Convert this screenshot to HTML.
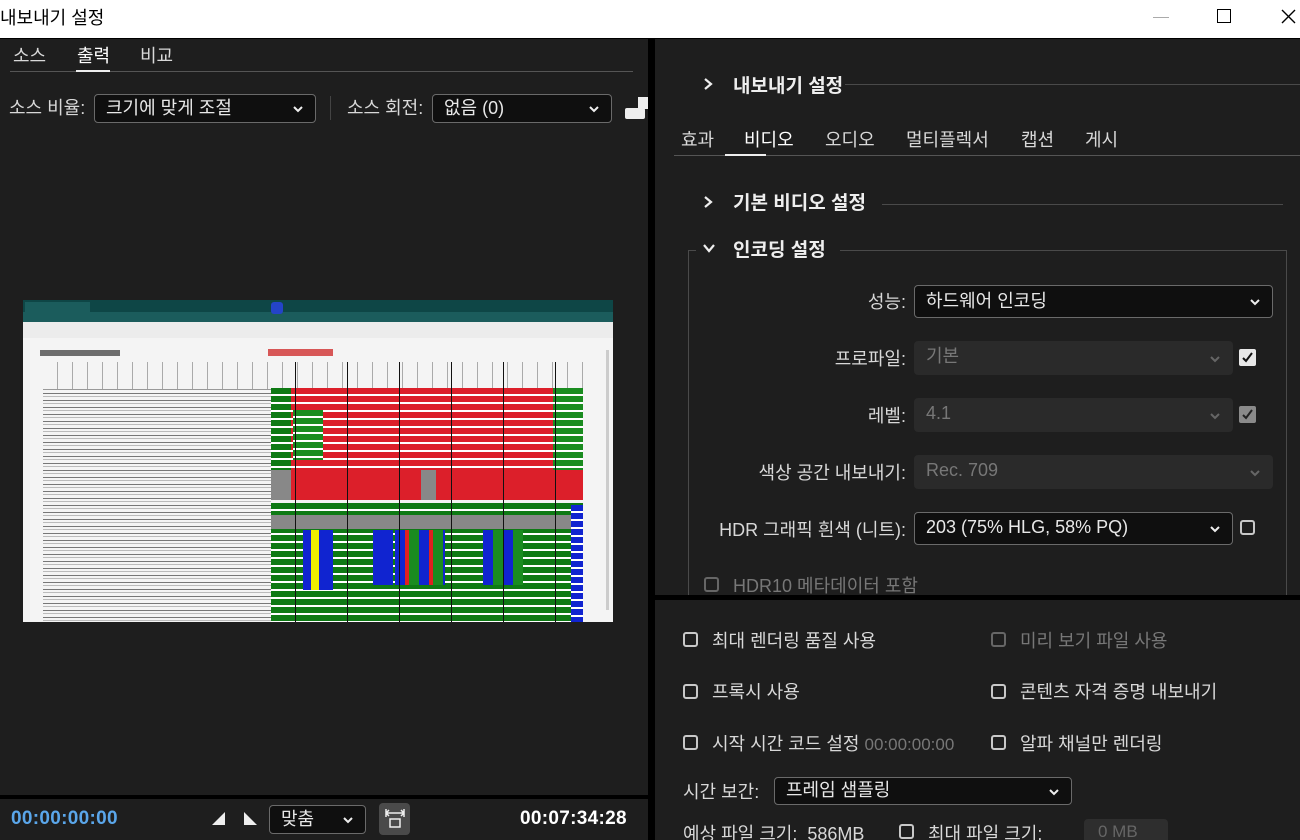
<!DOCTYPE html>
<html><head><meta charset="utf-8">
<style>
*{margin:0;padding:0;box-sizing:border-box}
html,body{width:1300px;height:840px;overflow:hidden}
body{background:#000;font-family:"Liberation Sans","Noto Sans CJK KR",sans-serif;color:#d8d8d8;position:relative}
.a{position:absolute}
.t{position:absolute;white-space:nowrap;font-size:18px}
.r{position:absolute;white-space:nowrap;font-size:18px;right:394px;text-align:right}
.sel{position:absolute;border:1px solid #6a6a6a;border-radius:4px;background:#0f0f0f;color:#e8e8e8;font-size:18px;padding-left:11px;line-height:27px}
.dis{background:#2a2a2a;border-color:#2a2a2a;color:#777}
.chev{position:absolute;right:12px;top:9px;width:10px;height:10px}
.cb{position:absolute;width:15px;height:15px;border:2px solid #c8c8c8;border-radius:3px}
.hl{position:absolute;height:1px;background:#4a4a4a}
</style></head><body>
<div class="a" style="left:0;top:0;width:1300px;height:38px;background:#fff"></div>
<div class="t" style="left:0;top:4px;color:#000;font-size:18px">내보내기 설정</div>
<div class="a" style="left:1153px;top:17px;width:16px;height:1px;background:#aaa"></div>
<div class="a" style="left:1217px;top:9px;width:14px;height:14px;border:1.5px solid #000"></div>
<svg class="a" style="left:1281px;top:9px" width="15" height="15"><path d="M1 1L14 14M14 1L1 14" stroke="#000" stroke-width="1.4"/></svg>

<div class="a" style="left:0;top:39px;width:648px;height:756px;background:#1e1e1e"></div>
<div class="t" style="left:13px;top:42px">소스</div>
<div class="t" style="left:77px;top:42px;color:#fff">출력</div>
<div class="t" style="left:140px;top:42px">비교</div>
<div class="hl" style="left:10px;top:71px;width:623px;background:#555"></div>
<div class="a" style="left:76px;top:70px;width:34px;height:2px;background:#eee"></div>

<div class="t" style="left:9px;top:94px">소스 비율:</div>
<div class="sel" style="left:94px;top:94px;width:222px;height:29px">크기에 맞게 조절<svg class="chev" viewBox="0 0 10 10"><path d="M1 3L5 7L9 3" stroke="#eee" stroke-width="2" fill="none"/></svg></div>
<div class="a" style="left:330px;top:96px;width:1px;height:24px;background:#444"></div>
<div class="t" style="left:347px;top:94px">소스 회전:</div>
<div class="sel" style="left:432px;top:94px;width:180px;height:29px">없음 (0)<svg class="chev" viewBox="0 0 10 10"><path d="M1 3L5 7L9 3" stroke="#eee" stroke-width="2" fill="none"/></svg></div>
<div class="a" style="left:625px;top:108px;width:20px;height:11px;background:#eee;border-radius:2px"></div>
<div class="a" style="left:638px;top:97px;width:10px;height:12px;background:#eee"></div>

<div class="a" style="left:23px;top:300px;width:590px;height:322px;background:#f4f4f4;overflow:hidden">
 <div class="a" style="left:0;top:0;width:590px;height:12px;background:#0e4646"></div>
 <div class="a" style="left:0;top:12px;width:590px;height:10px;background:#1b5c5c"></div>
 <div class="a" style="left:2px;top:2px;width:65px;height:10px;background:#1b5c5c"></div>
 <div class="a" style="left:248px;top:2px;width:12px;height:12px;background:#2444c8;border-radius:3px"></div>
 <div class="a" style="left:0;top:22px;width:590px;height:16px;background:#ececec"></div>
 <div class="a" style="left:17px;top:50px;width:80px;height:6px;background:#333;opacity:.7"></div>
 <div class="a" style="left:245px;top:49px;width:65px;height:7px;background:#d03030;opacity:.8"></div>
 <div class="a" style="left:20px;top:62px;width:540px;height:28px;border-bottom:1px solid #999;background:repeating-linear-gradient(90deg,#f4f4f4 0 14px,#aaa 14px 15px)"></div>
 <div class="a" style="left:20px;top:90px;width:228px;height:232px;background:repeating-linear-gradient(180deg,#f4f4f4 0 3px,#777 3px 4px,#f4f4f4 4px 6px,#bbb 6px 7px)"></div>
 <div class="a" style="left:248px;top:88px;width:312px;height:108px;background:repeating-linear-gradient(180deg,#dc1f2a 0 6px,#fff 6px 8px)"></div>
 <div class="a" style="left:248px;top:88px;width:20px;height:112px;background:repeating-linear-gradient(180deg,#0e7a14 0 6px,#fff 6px 8px)"></div>
 <div class="a" style="left:270px;top:110px;width:30px;height:50px;background:repeating-linear-gradient(180deg,#1a8c20 0 6px,#fff 6px 8px)"></div>
 <div class="a" style="left:530px;top:88px;width:30px;height:100px;background:repeating-linear-gradient(180deg,#1a8c20 0 6px,#fff 6px 8px)"></div>
 <div class="a" style="left:248px;top:170px;width:312px;height:30px;background:repeating-linear-gradient(90deg,#888 0 20px,#dc1f2a 20px 150px,#888 150px 165px,#dc1f2a 165px 312px)"></div>
 <div class="a" style="left:248px;top:203px;width:312px;height:119px;background:repeating-linear-gradient(180deg,#0e7a14 0 6px,#fff 6px 8px)"></div>
 <div class="a" style="left:248px;top:215px;width:312px;height:14px;background:#888"></div>
 <div class="a" style="left:280px;top:230px;width:30px;height:60px;background:repeating-linear-gradient(90deg,#1024d0 0 8px,#f0f000 8px 16px,#1024d0 16px 30px)"></div>
 <div class="a" style="left:350px;top:230px;width:20px;height:55px;background:#1024d0"></div>
 <div class="a" style="left:372px;top:230px;width:50px;height:55px;background:repeating-linear-gradient(90deg,#1024d0 0 10px,#e02020 10px 14px,#1a8c20 14px 24px)"></div>
 <div class="a" style="left:460px;top:230px;width:40px;height:55px;background:repeating-linear-gradient(90deg,#1024d0 0 10px,#1a8c20 10px 20px)"></div>
 <div class="a" style="left:548px;top:205px;width:12px;height:117px;background:repeating-linear-gradient(180deg,#1024d0 0 6px,#fff 6px 8px)"></div>
 <div class="a" style="left:248px;top:62px;width:312px;height:260px;background:repeating-linear-gradient(90deg,transparent 0 24px,#111 24px 25px,transparent 25px 52px)"></div>
 <div class="a" style="left:583px;top:50px;width:3px;height:260px;background:#ccc"></div>
</div>

<div class="a" style="left:0;top:799px;width:648px;height:41px;background:#1e1e1e"></div>
<div class="t" style="left:11px;top:808px;color:#5aa6ea;font-weight:bold;font-size:19px;letter-spacing:0.3px">00:00:00:00</div>
<svg class="a" style="left:212px;top:812px" width="14" height="14"><path d="M13 0L13 13L0 13Z" fill="#eee"/></svg>
<svg class="a" style="left:243px;top:812px" width="14" height="14"><path d="M1 0L1 13L14 13Z" fill="#eee"/></svg>
<div class="sel" style="left:269px;top:805px;width:97px;height:29px;line-height:26px">맞춤<svg class="chev" viewBox="0 0 10 10"><path d="M1 3L5 7L9 3" stroke="#eee" stroke-width="2" fill="none"/></svg></div>
<div class="a" style="left:379px;top:803px;width:31px;height:32px;background:#4a4a4a;border-radius:4px"></div>
<svg class="a" style="left:384px;top:808px" width="22" height="22"><path d="M2 5H20M2 5L5 2M2 5L5 8M20 5L17 2M20 5L17 8M2 1V9M20 1V9" stroke="#eee" stroke-width="1.5" fill="none"/><rect x="6" y="11" width="10" height="8" stroke="#eee" stroke-width="1.5" fill="none"/></svg>
<div class="t" style="left:520px;top:808px;color:#fff;font-weight:bold;font-size:19px;letter-spacing:0.3px">00:07:34:28</div>

<div class="a" style="left:655px;top:39px;width:645px;height:556px;background:#1e1e1e"></div>
<svg class="a" style="left:702px;top:77px" width="12" height="14"><path d="M3 2L9 7L3 12" stroke="#eee" stroke-width="2.2" fill="none"/></svg>
<div class="t" style="left:733px;top:71px;color:#eee;font-weight:bold;font-size:19px">내보내기 설정</div>
<div class="hl" style="left:845px;top:84px;width:455px"></div>

<div class="t" style="left:681px;top:126px">효과</div>
<div class="t" style="left:744px;top:126px;color:#fff">비디오</div>
<div class="t" style="left:825px;top:126px">오디오</div>
<div class="t" style="left:906px;top:126px">멀티플렉서</div>
<div class="t" style="left:1021px;top:126px">캡션</div>
<div class="t" style="left:1085px;top:126px">게시</div>
<div class="hl" style="left:674px;top:155px;width:626px;background:#555"></div>
<div class="a" style="left:725px;top:154px;width:41px;height:2px;background:#eee"></div>

<svg class="a" style="left:702px;top:195px" width="12" height="14"><path d="M3 2L9 7L3 12" stroke="#eee" stroke-width="2.2" fill="none"/></svg>
<div class="t" style="left:733px;top:188px;color:#eee;font-weight:bold;font-size:19px">기본 비디오 설정</div>
<div class="hl" style="left:882px;top:204px;width:401px"></div>

<svg class="a" style="left:702px;top:242px" width="14" height="12"><path d="M2 3L7 9L12 3" stroke="#eee" stroke-width="2.2" fill="none"/></svg>
<div class="t" style="left:733px;top:235px;color:#eee;font-weight:bold;font-size:19px">인코딩 설정</div>
<div class="a" style="left:688px;top:250px;width:1px;height:345px;background:#4a4a4a"></div>
<div class="hl" style="left:688px;top:250px;width:8px"></div>
<div class="hl" style="left:840px;top:250px;width:447px"></div>
<div class="a" style="left:1286px;top:250px;width:1px;height:345px;background:#4a4a4a"></div>

<div class="r" style="top:288px">성능:</div>
<div class="sel" style="left:914px;top:285px;width:359px;height:33px;line-height:30px">하드웨어 인코딩<svg class="chev" style="top:11px" viewBox="0 0 10 10"><path d="M1 3L5 7L9 3" stroke="#eee" stroke-width="2" fill="none"/></svg></div>

<div class="r" style="top:345px">프로파일:</div>
<div class="sel dis" style="left:914px;top:341px;width:319px;height:34px;line-height:29px">기본<svg class="chev" style="top:12px" viewBox="0 0 10 10"><path d="M1 3L5 7L9 3" stroke="#666" stroke-width="2" fill="none"/></svg></div>
<div class="a" style="left:1239px;top:349px;width:17px;height:17px;background:#e8e8e8;border-radius:2px"></div>
<svg class="a" style="left:1241px;top:351px" width="13" height="13"><path d="M2 7L5 10L11 2" stroke="#111" stroke-width="2" fill="none"/></svg>

<div class="r" style="top:402px">레벨:</div>
<div class="sel dis" style="left:914px;top:398px;width:319px;height:34px;line-height:29px">4.1<svg class="chev" style="top:12px" viewBox="0 0 10 10"><path d="M1 3L5 7L9 3" stroke="#666" stroke-width="2" fill="none"/></svg></div>
<div class="a" style="left:1239px;top:406px;width:17px;height:17px;background:#8a8a8a;border-radius:2px"></div>
<svg class="a" style="left:1241px;top:408px" width="13" height="13"><path d="M2 7L5 10L11 2" stroke="#222" stroke-width="2" fill="none"/></svg>

<div class="r" style="top:459px">색상 공간 내보내기:</div>
<div class="sel dis" style="left:914px;top:455px;width:359px;height:34px;line-height:29px">Rec. 709<svg class="chev" style="top:12px" viewBox="0 0 10 10"><path d="M1 3L5 7L9 3" stroke="#666" stroke-width="2" fill="none"/></svg></div>

<div class="r" style="top:516px">HDR 그래픽 흰색 (니트):</div>
<div class="sel" style="left:914px;top:512px;width:319px;height:33px;line-height:28px">203 (75% HLG, 58% PQ)<svg class="chev" style="top:11px" viewBox="0 0 10 10"><path d="M1 3L5 7L9 3" stroke="#eee" stroke-width="2" fill="none"/></svg></div>
<div class="cb" style="left:1240px;top:520px"></div>

<div class="cb" style="left:704px;top:577px;border-color:#666"></div>
<div class="t" style="left:733px;top:572px;color:#777">HDR10 메타데이터 포함</div>

<div class="a" style="left:655px;top:600px;width:645px;height:240px;background:#1e1e1e"></div>
<div class="cb" style="left:683px;top:632px"></div><div class="t" style="left:712px;top:627px">최대 렌더링 품질 사용</div>
<div class="cb" style="left:991px;top:632px;border-color:#666"></div><div class="t" style="left:1020px;top:627px;color:#777">미리 보기 파일 사용</div>
<div class="cb" style="left:683px;top:684px"></div><div class="t" style="left:712px;top:678px">프록시 사용</div>
<div class="cb" style="left:991px;top:684px"></div><div class="t" style="left:1020px;top:678px">콘텐츠 자격 증명 내보내기</div>
<div class="cb" style="left:683px;top:735px"></div><div class="t" style="left:712px;top:730px">시작 시간 코드 설정 <span style="color:#777;font-size:17px">00:00:00:00</span></div>
<div class="cb" style="left:991px;top:735px"></div><div class="t" style="left:1020px;top:730px">알파 채널만 렌더링</div>
<div class="t" style="left:683px;top:778px">시간 보간:</div>
<div class="sel" style="left:774px;top:777px;width:298px;height:28px;line-height:24px">프레임 샘플링<svg class="chev" viewBox="0 0 10 10"><path d="M1 3L5 7L9 3" stroke="#eee" stroke-width="2" fill="none"/></svg></div>
<div class="t" style="left:683px;top:820px">예상 파일 크기: &nbsp;586MB</div>
<div class="cb" style="left:899px;top:824px"></div><div class="t" style="left:928px;top:820px">최대 파일 크기:</div>
<div class="a" style="left:1084px;top:819px;width:84px;height:21px;background:#2e2e2e;border-radius:4px 4px 0 0;color:#666;font-size:17px;padding:3px 0 0 14px;overflow:hidden">0 MB</div>
</body></html>
